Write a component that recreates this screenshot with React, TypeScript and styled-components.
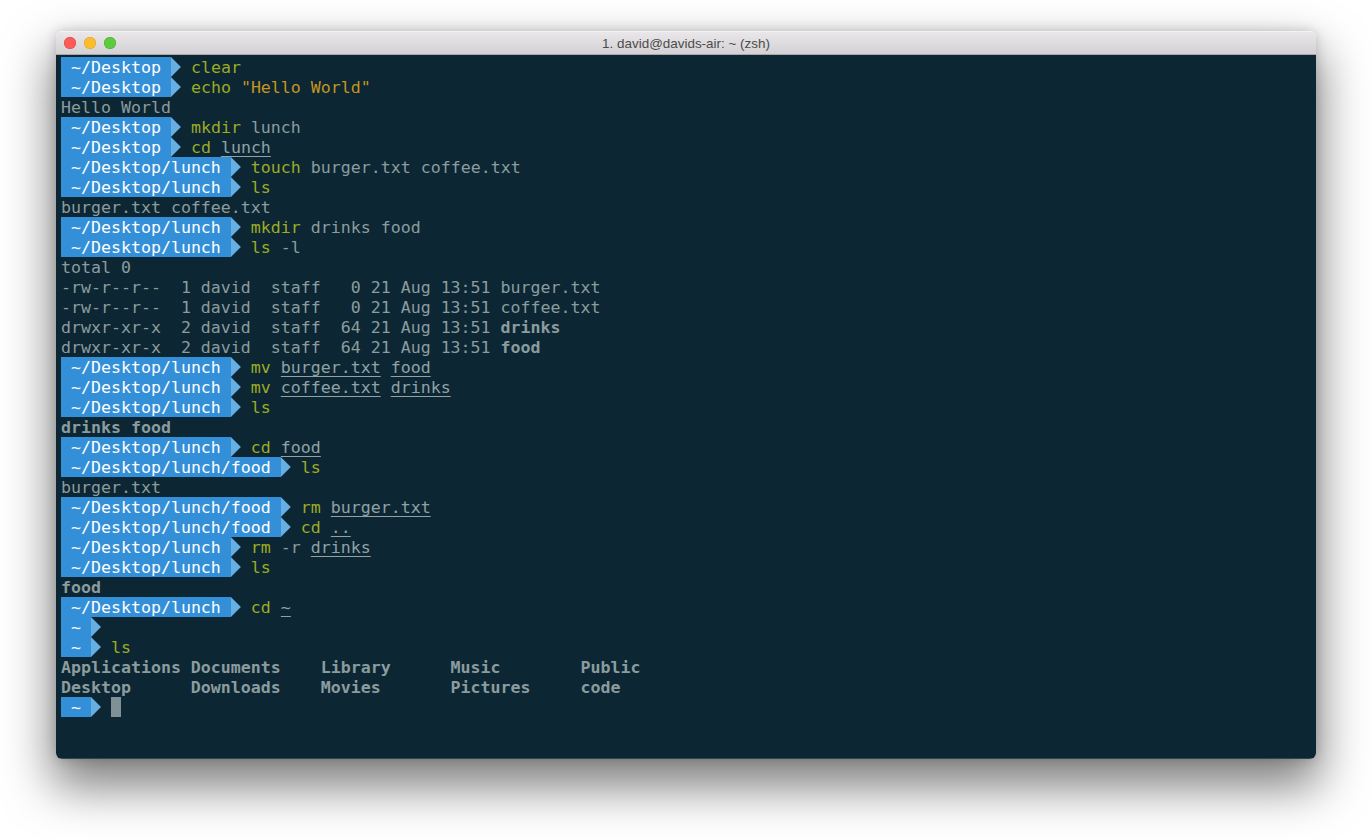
import styled, { createGlobalStyle } from "styled-components";

const GlobalStyle = createGlobalStyle`
    html, body {
        margin: 0;
        padding: 0;
        background: #ffffff;
    }
`

const Page = styled.div`
    width: 1372px;
    height: 839px;
    padding: 31px 56px 0;
    box-sizing: border-box;
    overflow: hidden;
`

const Window = styled.div`
    width: 1260px;
    height: 728px;
    display: flex;
    flex-direction: column;
    border-radius: 6px;
    overflow: hidden;
`

const Shadow = styled.div`
    width: 1260px;
    height: 728px;
    border-radius: 6px;
    box-shadow: 0 24px 48px 4px rgba(0, 0, 0, 0.5), 0 0 12px rgba(0, 0, 0, 0.18);
`

const TitleBar = styled.div`
    height: 24px;
    flex: none;
    display: flex;
    align-items: center;
    position: relative;
    box-sizing: border-box;
    background: linear-gradient(#e9e7e9, #d3d1d3);
    border-top: 1px solid #f4f3f4;
    border-bottom: 1px solid #a9a8a9;
`

const Lights = styled.div`
    display: flex;
    gap: 8px;
    padding-left: 8px;
`

const Light = styled.div<{ $color: string; $edge: string }>`
    width: 12px;
    height: 12px;
    border-radius: 50%;
    background: ${p => p.$color};
    box-shadow: inset 0 0 0 0.5px ${p => p.$edge};
`

const Title = styled.div`
    position: absolute;
    left: 0;
    right: 0;
    top: 4px;
    text-align: center;
    font: 13.45px/16px "Liberation Sans", Arial, sans-serif;
    color: #4c4b4c;
`

const Terminal = styled.div`
    flex: 1;
    background: #0c2733;
    padding: 2px 5px 0;
    font-family: "DejaVu Sans Mono", monospace;
    font-size: 16.6px;
    line-height: 22px;
    color: #8b9c9f;
    white-space: pre;
    box-shadow: inset 0 -1px 0 rgba(255, 255, 255, 0.15);
`

const Row = styled.div`
    display: flex;
    height: 20px;
`

const Prompt = styled.span`
    background: #348fd9;
    color: #ffffff;
    padding: 0 10px;
    width: fit-content;
`

const Arrow = styled.span`
    width: 10px;
    height: 20px;
    background: #67aee2;
    clip-path: polygon(0 0, 100% 50%, 0 100%);
    margin-right: 10px;
`

const Command = styled.span`
    color: #9dab24;
`

const Quoted = styled.span`
    color: #c4951f;
`

const Path = styled.span`
    text-decoration: underline;
    text-decoration-thickness: 1px;
    text-underline-offset: 3px;
    text-decoration-skip-ink: none;
    color: #90a2a6;
`

const Strong = styled.span`
    font-weight: bold;
`

const Cursor = styled.span`
    width: 10px;
    height: 20px;
    background: #7f9196;
`

type Part = { text: string; kind?: "path" | "quoted" }

type Line =
    | { dir: string; cmd?: string; args?: Part[]; cursor?: boolean }
    | { out: string; bold?: boolean; file?: string }

const DESK = "~/Desktop"
const LUNCH = "~/Desktop/lunch"
const FOOD = "~/Desktop/lunch/food"

const path = (text: string): Part => ({ text, kind: "path" })
const plain = (text: string): Part => ({ text })

const lines: Line[] = [
    { dir: DESK, cmd: "clear" },
    { dir: DESK, cmd: "echo", args: [{ text: '"Hello World"', kind: "quoted" }] },
    { out: "Hello World" },
    { dir: DESK, cmd: "mkdir", args: [plain("lunch")] },
    { dir: DESK, cmd: "cd", args: [path("lunch")] },
    { dir: LUNCH, cmd: "touch", args: [plain("burger.txt"), plain("coffee.txt")] },
    { dir: LUNCH, cmd: "ls" },
    { out: "burger.txt coffee.txt" },
    { dir: LUNCH, cmd: "mkdir", args: [plain("drinks"), plain("food")] },
    { dir: LUNCH, cmd: "ls", args: [plain("-l")] },
    { out: "total 0" },
    { out: "-rw-r--r--  1 david  staff   0 21 Aug 13:51 burger.txt" },
    { out: "-rw-r--r--  1 david  staff   0 21 Aug 13:51 coffee.txt" },
    { out: "drwxr-xr-x  2 david  staff  64 21 Aug 13:51 ", file: "drinks" },
    { out: "drwxr-xr-x  2 david  staff  64 21 Aug 13:51 ", file: "food" },
    { dir: LUNCH, cmd: "mv", args: [path("burger.txt"), path("food")] },
    { dir: LUNCH, cmd: "mv", args: [path("coffee.txt"), path("drinks")] },
    { dir: LUNCH, cmd: "ls" },
    { out: "drinks food", bold: true },
    { dir: LUNCH, cmd: "cd", args: [path("food")] },
    { dir: FOOD, cmd: "ls" },
    { out: "burger.txt" },
    { dir: FOOD, cmd: "rm", args: [path("burger.txt")] },
    { dir: FOOD, cmd: "cd", args: [path("..")] },
    { dir: LUNCH, cmd: "rm", args: [plain("-r"), path("drinks")] },
    { dir: LUNCH, cmd: "ls" },
    { out: "food", bold: true },
    { dir: LUNCH, cmd: "cd", args: [path("~")] },
    { dir: "~" },
    { dir: "~", cmd: "ls" },
    { out: "Applications Documents    Library      Music        Public", bold: true },
    { out: "Desktop      Downloads    Movies       Pictures     code", bold: true },
    { dir: "~", cursor: true },
]

function Arg({ part }: { part: Part }) {
    if (part.kind === "path") return <Path>{part.text}</Path>
    if (part.kind === "quoted") return <Quoted>{part.text}</Quoted>
    return <span>{part.text}</span>
}

function TerminalLine({ line }: { line: Line }) {
    if ("out" in line) {
        return (
            <Row>
                {line.bold ? <Strong>{line.out}</Strong> : line.out}
                {line.file && <Strong>{line.file}</Strong>}
            </Row>
        )
    }
    return (
        <Row>
            <Prompt>{line.dir}</Prompt>
            <Arrow />
            {line.cmd && <Command>{line.cmd}</Command>}
            {line.args?.map((part, index) => (
                <span key={index}> <Arg part={part} /></span>
            ))}
            {line.cursor && <Cursor />}
        </Row>
    )
}

export default function App() {
    return (
        <Page>
            <GlobalStyle />
            <Shadow>
                <Window>
                    <TitleBar>
                        <Lights>
                            <Light $color="#fc5b57" $edge="#e0443e" />
                            <Light $color="#fdbc2e" $edge="#dea123" />
                            <Light $color="#5fc93f" $edge="#4bae2f" />
                        </Lights>
                        <Title>1. david@davids-air: ~ (zsh)</Title>
                    </TitleBar>
                    <Terminal>
                        {lines.map((line, index) => (
                            <TerminalLine key={index} line={line} />
                        ))}
                    </Terminal>
                </Window>
            </Shadow>
        </Page>
    )
}
